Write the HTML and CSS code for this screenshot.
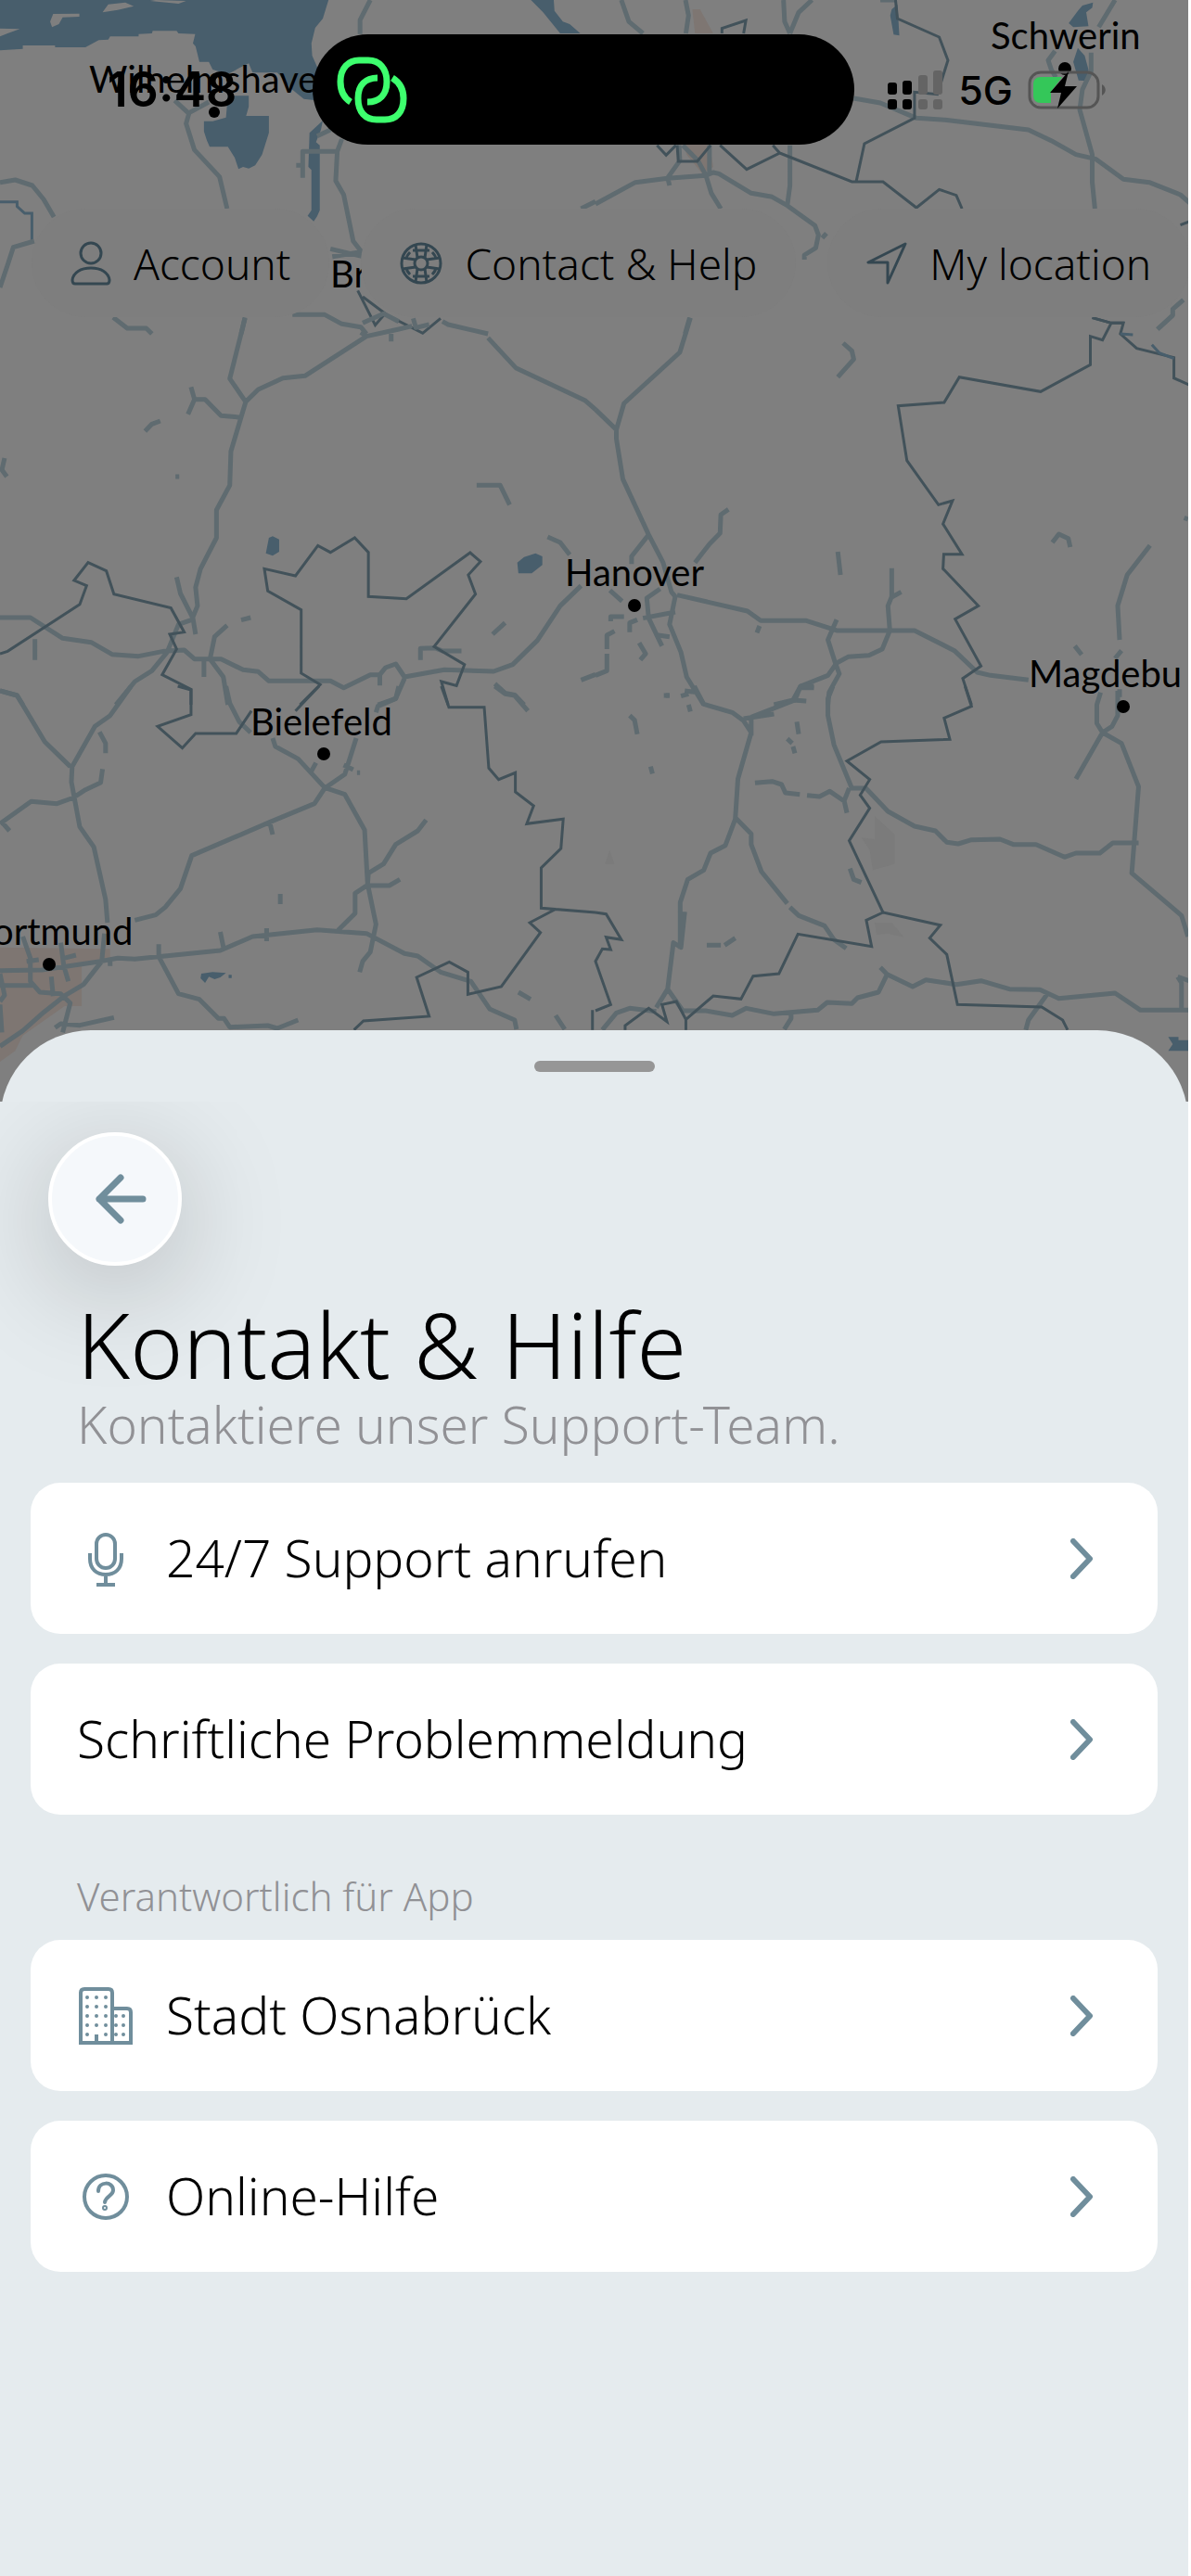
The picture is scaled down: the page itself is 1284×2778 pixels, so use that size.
FILE: index.html
```html
<!DOCTYPE html>
<html lang="de">
<head>
<meta charset="utf-8">
<meta name="viewport" content="width=device-width, initial-scale=1">
<title>Kontakt &amp; Hilfe</title>
<link rel="stylesheet" href="styles.css">
</head>
<body>
<div class="app">
  <div class="map">
    <svg class="map-art" width="1284" height="1200" viewBox="0 0 1284 1200" aria-hidden="true">
      <!-- north-west tile -->
      <g transform="scale(.40944 .33333)">
        <path class="water" d="M0 0H865L850 60L830 90L820 140L822 180L840 230L870 330L800 320L770 290L730 235H665L655 205L630 220L600 240L560 225L550 200H525L515 150L508 140L514 110L470 108L465 100H402L400 108L365 110V118H290L285 128L260 130L225 153H145V147H60V158L0 163Z"/>
        <path class="land" d="M270 40L285 14L330 8L352 20L310 32ZM137 88L132 70L140 45L209 44V54L165 56L155 78ZM0 92L52 94L20 108L0 118ZM395 3L410 0L490 3L470 12Z"/>
        <path class="water" d="M600 310H655V345L648 375H708V430L690 500L672 535L655 545L640 540L628 547L618 510L600 475H552L545 455L537 425V392H560L595 380ZM815 430L850 390L845 420L832 460L842 470V680L835 700L826 716L810 698L820 680V550L812 540ZM1398 0H1458L1460 35L1482 70L1500 78L1528 108H1475L1430 40Z"/>
        <path class="river" d="M0 653H45V668L65 690H84V780"/>
        <path class="road" d="M975 0L948 65V110M460 325L500 370M550 330L498 365L490 400L512 485L578 572L598 675M0 590L40 582L85 600L115 645L142 702M90 780L35 800L22 850L0 930M900 450L888 490L884 585L905 630L930 780L955 820M797 575V490H888M797 535H780M835 440L870 420M1530 675L1568 652M870 805L955 830M875 830L950 815"/>
        <path class="road" d="M298 1027L335 1062H385L400 1080M645 1027L635 1080M770 1018H855L900 1048L950 1058L965 1080M1165 1040L1180 1050L1285 1080"/>
        <path class="border" d="M942 940L988 1052L1010 1020M955 960L1020 1020L1113 1078L1160 1030"/>
        <path class="road" d="M955 1045L1010 1015L1050 1040M1088 1030L1095 1060L1130 1050"/>
      </g>
      <!-- north-east tile -->
      <g transform="translate(642 0) scale(.40944 .33333)">
        <path class="town" d="M255 30H275L310 108H262ZM232 468H300L310 540L280 560L240 500Z"/>
        <path class="water" d="M780 30L795 15L800 115L785 112L776 50ZM1310 8L1308 25L1292 40L1298 85L1258 88L1246 75L1270 35L1282 18ZM1270 155L1288 180L1298 225V262L1272 260L1258 200Z"/>
        <path class="road" d="M68 0L88 70L125 108M237 0L245 50L238 108M495 0L498 70L512 108M570 0L535 40L512 108M750 0H790M1368 0L1325 88M1210 165L1192 195L1200 225L1212 250M1305 170V230L1282 290L1275 355L1308 500V590L1315 675"/>
        <path class="road" d="M680 318L750 333L845 382L920 388L1140 420L1200 455L1265 500L1318 515L1390 580L1458 590L1540 630L1568 660M0 660L105 590L190 577L290 568L310 558L325 562L410 625L465 637L505 665L578 730L587 760L580 802L550 825V840M597 770L608 755M512 470V600L505 665M220 470L222 520L190 575L195 600M230 470L270 520L290 565L305 625L330 675M300 470L300 560M248 1028L236 1080M1548 970L1520 1000V1020L1480 1065"/>
        <path class="border" d="M333 108V92L396 66L390 108M162 470L186 502L212 470M215 470L218 522H268L303 470M328 470L398 548L485 495L467 470M485 495L675 588H757L845 672L905 613L950 632L965 675M790 0L795 60L905 120L928 195L900 305L840 298V382L708 465L686 590M1308 1028L1358 1045H1392M1540 728L1568 715"/>
      </g>
      <!-- west tile -->
      <g transform="translate(0 340) scale(.40944 .33333)">
        <path class="water" d="M708 720L718 715L735 725V765L718 778L700 770ZM1362 800L1380 782L1410 770L1428 780V808L1400 835H1365Z"/>
        <path class="road" d="M645 10L605 205L647 280L608 440L605 550L570 630V720L528 820L515 880L520 940L505 985L470 1000L440 1090L400 1150L355 1185L305 1260M647 280L680 240L745 203L803 196L965 68L1050 45L1085 35M950 55L965 68M1030 60V85M1285 73L1358 170L1540 275L1568 305M503 232L512 272L495 320M512 272H540L582 325L630 330M382 375L400 352L422 342M12 462L5 500L18 522M1255 550L1317 550L1342 613M1442 717L1475 735L1500 775M465 847L475 900L508 980L515 1032M598 1003L565 1040L553 1112L588 1170L600 1260M635 986L660 978M1330 995L1297 1032M92 1048V1115M0 978H80L165 1045L240 1058L295 1097L365 1103L430 1087L485 1083L512 1112H582L640 1147L680 1153L708 1183H870L905 1205L975 1163H1000L1015 1140L1042 1128L1065 1170L1170 1147L1300 1152L1350 1130L1415 1052L1475 940L1530 875M537 1115V1170M1000 1160V1198M1065 1175L1042 1240L995 1260M1107 1115V1078L1145 1076L1165 1086H1215M1303 1192L1330 1222L1355 1228L1380 1260M0 1215L45 1230L60 1260M1530 1180L1568 1162M462 522H472"/>
        <path class="border" d="M0 1095L20 1087L210 935L228 875L195 858L232 800L280 827L300 902L450 947L485 1025L447 1032L465 1080L427 1163L503 1210V1260M790 1260L843 1195L793 1158V953L705 892L696 820L778 843L837 745L870 767L934 720L970 767V910L1070 917L1238 768L1265 797L1233 840L1252 902L1143 1072L1223 1130L1202 1198L1162 1185L1180 1260"/>
      </g>
      <!-- east tile -->
      <g transform="translate(642 340) scale(.40944 .33333)">
        <path class="road" d="M250 8L222 120L75 285L55 370V400L72 530L140 710L178 800L200 895L210 910L195 1000L225 1090L240 1170L285 1260M0 305L55 370M140 710L95 780V805M350 628L330 645L328 705L300 740L262 800M652 90L675 115L680 142L638 200M638 765L645 840M780 818V910L770 940L775 1020L755 1080L720 1100L665 1105L635 1125L612 1165L540 1200L520 1245L470 1260M805 895L780 912M215 905L400 957L435 988H555L635 1020H840L945 1085L1005 1155L1040 1165L1140 1180M635 985L612 1050L630 1120L642 1160L615 1220L612 1260M1203 735L1220 708L1245 722L1250 750M1460 745L1400 840L1375 940L1380 1050M1262 1070L1280 1098M1385 1085L1368 1110M38 890L70 925M170 885L135 915L140 980L175 1070M125 980L210 960M75 975H40V990M110 985L90 995V1025M50 1022L30 1035V1080M30 1095V1150L0 1165M115 1060L132 1095L118 1115M432 1005L425 1027M165 1035L195 1040M235 1215L270 1220M180 1230H195M1520 0L1480 45M1550 655L1560 660M540 1205H575M520 1245L555 1248M1380 1210V1235"/>
        <path class="border" d="M1308 8L1358 25H1390L1382 60L1425 107L1523 137V203L1568 228M1358 25L1335 80L1303 68V160L1172 247L958 200L918 282L797 293L820 470L903 613L940 600L915 675L965 773H917L915 820L1008 940L947 983L1015 1135L967 1175L990 1260"/>
        <path class="river" d="M1382 60L1415 63M1465 95L1485 122L1523 140"/>
      </g>
      <!-- south-west tile -->
      <g transform="translate(0 740) scale(.40944 .33333)">
        <path class="town" d="M0 845L290 850V880L215 900V1035H170L60 1130L40 1180L0 1215Z"/>
        <path class="water" d="M530 930L560 925L595 928L580 942L565 948L550 940L540 960L528 945ZM602 934H610V944H602Z"/>
        <path class="road" d="M0 15L45 30L118 180L185 260M345 0L290 95L250 130L190 260L188 310L210 455L247 520L278 690L283 765M262 148L278 185V217M270 268L265 312L225 335L200 355M0 445L82 373L150 380L195 360M5 440L25 468M595 0L605 55L630 115L660 150M718 168L725 195L785 235L855 328L908 350L960 465L968 640L990 770L975 860L955 890L947 925M1050 0L1042 40L995 65L990 85M938 168L908 285L855 330L828 380L710 440L505 548L475 655L435 715L410 740L355 757M710 440L718 480M832 248L820 275M905 255L930 270M1122 433L1100 468L1042 512L1010 575L970 605L968 643L935 670V735L890 790M1053 625L1025 645H970M738 672V705M1303 0L1330 25L1355 30L1390 80M0 920L110 918L265 890L310 880L355 883L580 855L665 810L835 788L965 800L1065 865L1100 873L1160 925L1240 955L1290 1045L1355 1080L1360 1110M418 835V875L470 995L525 1013L575 1075H590L605 1103L705 1098L730 1107L785 1080M580 795L590 855M702 783V825M275 800L268 890L220 965L172 1000L115 1055L60 1115L0 1165M60 810L80 880V955L105 990L160 995L185 1025L165 1120M160 830L168 905L180 955M0 968H85M0 930L12 1000L0 1020M0 1030L5 1120M135 940L140 1003M168 880L200 870M70 890L102 885M300 1072L210 1097L160 1092L145 1105M290 890V905M1365 990L1397 1013M1463 1065L1487 1110M940 280H948"/>
        <path class="border" d="M468 0L503 12V92L415 130L480 200L515 153H622L662 80M778 80L840 0M1162 0L1182 68H1275L1287 265L1313 302L1357 280V342L1405 387L1387 445L1483 430L1477 525L1425 588V718L1568 732M1465 720L1395 765L1423 797L1320 972L1232 997V925L1183 892L1097 942L1130 1068L957 1083L932 1112M1560 1112V1048"/>
      </g>
      <!-- south-east tile -->
      <g transform="translate(642 740) scale(.40944 .33333)">
        <path class="water" d="M1508 1135H1535V1145H1568V1180H1508L1520 1158Z"/>
        <path class="moor" d="M735 420L788 480V575L730 595L722 530L700 490L735 495ZM735 765H780L812 812L770 800L740 805ZM25 575L37 530L50 575Z"/>
        <path class="road" d="M260 0L285 58L360 85L390 112L410 150L375 300L368 430L342 515L303 540L285 595L243 625L223 700V850M470 90L390 105M410 100L525 45L540 0H575M410 100V160M90 95L103 110L110 155M145 260L150 283M625 0L612 40V95L628 190L675 330H712L770 405L840 453L895 468L925 505L955 510L990 497L1065 495L1100 512H1160L1235 553L1265 540H1328L1362 507H1430M420 313L465 308L490 318L500 345L538 350M557 353L590 357L617 340L655 372L662 410M655 370L668 330M368 425L410 478V512L437 600L505 703M512 715L535 742L603 775L628 820L660 848M530 115L535 155M505 170L518 185M520 195L525 217M1330 20L1320 60V120L1335 150L1265 300M1375 15V95L1360 130L1335 150L1385 185L1430 325L1412 605L1543 742L1560 810M293 838H330M340 838L368 815M670 590L680 625L700 635M235 730L225 845L205 830L190 980L160 1040M190 980L230 1050H290L360 1065L397 1042L470 1060L585 1048L610 1023L675 1027L690 1008L745 990L768 932L835 972L870 950L950 965L1015 953L1090 980L1170 982L1220 1010L1368 993L1435 1048H1568M750 910L768 932M515 1060V1075L497 1110M1190 995L1140 1080L1133 1112M18 1112L55 1057L90 1042L160 1052M1533 940L1543 960V1048M1533 940L1568 955M185 30H195M225 32L245 25M245 60L250 82"/>
        <path class="border" d="M973 0L990 65L918 103L933 172L752 180L662 242L722 302L697 352L722 395L668 500L757 732L908 773L880 815L925 868L953 1030L1175 1038L1230 1080L1243 1112M757 732L713 757L727 842L533 802L483 930L415 938L383 1012L310 1002L238 1078L213 1020L175 1030L188 1085L140 1042L78 1098V1112M238 1078V1112M0 732L28 737L68 820L28 812L40 852L18 850L0 890L40 1030L0 1050"/>
      </g>
      <g class="town-dots">
        <circle cx="231" cy="121" r="6"/><circle cx="684" cy="653" r="7"/><circle cx="1211" cy="762" r="7"/><circle cx="349" cy="813" r="7"/><circle cx="53" cy="1040" r="7"/><circle cx="1148" cy="74" r="7"/>
      </g>
    </svg>
    <span class="place place-wilhelmshaven">Wilhelmshaven</span>
    <span class="place place-schwerin">Schwerin</span>
    <span class="place place-bremen">Br</span>
    <span class="place place-hanover">Hanover</span>
    <span class="place place-magdeburg">Magdebu</span>
    <span class="place place-bielefeld">Bielefeld</span>
    <span class="place place-dortmund">ortmund</span>
  </div>

  <header class="top">
    <div class="status">
      <time class="clock">16:48</time>
      <div class="island">
        <svg width="76" height="72" viewBox="0 0 76 72" fill="none" stroke="#3dff6e" stroke-width="7" aria-hidden="true">
          <path d="M15 49C7 44 4 37 4 27C4 12 13 4 24 4H34C46 4 54 13 54 27C54 41 46 49 33 49"/>
          <path d="M44 23C31 23 23 31 23 45C23 60 31 68 43 68H52C64 68 72 60 72 45C72 36 68 28 60 23"/>
        </svg>
      </div>
      <div class="indicators">
        <svg width="60" height="42" viewBox="0 0 60 42" aria-hidden="true">
          <g fill="#000"><rect x="0" y="13" width="10" height="13" rx="3"/><rect x="16" y="11" width="10" height="15" rx="3"/><rect x="0" y="31" width="10" height="11" rx="3"/><rect x="16" y="31" width="10" height="11" rx="3"/></g>
          <g fill="#646464"><rect x="33" y="5" width="10" height="21" rx="3"/><rect x="49" y="0" width="10" height="26" rx="3"/><rect x="33" y="31" width="10" height="11" rx="3"/><rect x="49" y="31" width="10" height="11" rx="3"/></g>
        </svg>
        <span class="network">5G</span>
        <svg width="84" height="48" viewBox="0 0 84 48" aria-hidden="true">
          <rect x="2" y="5" width="74" height="38" rx="12" fill="none" stroke="#555" stroke-width="3"/>
          <path d="M14 10H37L25 26V38H14C9 38 6 35 6 30V18C6 13 9 10 14 10Z" fill="#34c759"/>
          <path d="M80 18C85 21 85 27 80 30Z" fill="#555"/>
          <path d="M44 4L24 27H36L32 44L53 20H40Z" fill="#000"/>
        </svg>
      </div>
    </div>
    <nav class="pills">
      <button class="pill" type="button">
        <svg width="44" height="48" viewBox="0 0 44 48" fill="none" stroke="#344751" stroke-width="3" aria-hidden="true"><circle cx="22" cy="13" r="11"/><path d="M2 42C3 34 11 29 22 29S41 34 42 42C42 45 41 46 39 46H5C3 46 2 45 2 42Z"/></svg>
        Account
      </button>
      <button class="pill" type="button">
        <svg width="46" height="48" viewBox="0 0 46 48" fill="none" stroke="#344751" stroke-width="3" aria-hidden="true"><circle cx="23" cy="24" r="21"/><circle cx="23" cy="24" r="7"/><path d="M17 4L19 18M29 4L27 18M17 44L19 30M29 44L27 30M3 18L17 20M3 30L17 28M43 18L29 20M43 30L29 28M11 12C8 15 7 18 7 20M35 12C38 15 39 18 39 20M11 36C8 33 7 30 7 28M35 36C38 33 39 30 39 28M14 10H32M14 38H32"/></svg>
        Contact &amp; Help
      </button>
      <button class="pill" type="button">
        <svg width="44" height="48" viewBox="0 0 44 48" fill="none" stroke="#344751" stroke-width="3" stroke-linejoin="round" aria-hidden="true"><path d="M42 3L2 23H23V45Z"/></svg>
        My location
      </button>
    </nav>
  </header>

  <main class="sheet">
    <div class="grip"></div>
    <div class="sheet-body">
      <button class="back" type="button" aria-label="Zurück">
        <svg width="56" height="54" viewBox="0 0 56 54" fill="none" stroke="#708e9c" stroke-width="7" stroke-linecap="round" stroke-linejoin="round" aria-hidden="true"><path d="M52 27H5M28 4L5 27L28 50"/></svg>
      </button>
      <h1 class="title">Kontakt &amp; Hilfe</h1>
      <p class="subtitle">Kontaktiere unser Support-Team.</p>
      <div class="list">
        <a class="card" href="#support">
          <svg class="icon" viewBox="0 0 60 64" fill="none" stroke="#708e9c" stroke-width="4" aria-hidden="true"><rect x="21" y="6" width="20" height="36" rx="10"/><path d="M14 26V32C14 43 21 49 31 49S48 43 48 32V26M31 49V59M21 60H41"/></svg>
          <span class="label">24/7 Support anrufen</span>
          <svg class="chevron" viewBox="0 0 24 44" aria-hidden="true"><path d="M3 3L21 22L3 41"/></svg>
        </a>
        <a class="card" href="#meldung">
          <span class="label">Schriftliche Problemmeldung</span>
          <svg class="chevron" viewBox="0 0 24 44" aria-hidden="true"><path d="M3 3L21 22L3 41"/></svg>
        </a>
      </div>
      <h2 class="section">Verantwortlich für App</h2>
      <div class="list">
        <a class="card" href="#stadt">
          <svg class="icon" viewBox="0 0 60 64" fill="none" stroke="#708e9c" stroke-width="4" aria-hidden="true"><path d="M4 61V7Q4 3 8 3H34Q38 3 38 7V61M38 24H54Q58 24 58 28V61M2 61H60M21 52V60"/><path stroke-linecap="round" d="M11 12h0M21 12h0M31 12h0M11 22h0M21 22h0M31 22h0M11 32h0M21 32h0M31 32h0M11 42h0M21 42h0M31 42h0M11 52h0M31 52h0M42 32h0M50 32h0M42 42h0M50 42h0M42 52h0M50 52h0"/></svg>
          <span class="label">Stadt Osnabrück</span>
          <svg class="chevron" viewBox="0 0 24 44" aria-hidden="true"><path d="M3 3L21 22L3 41"/></svg>
        </a>
        <a class="card" href="#hilfe">
          <svg class="icon" viewBox="0 0 60 64" fill="none" stroke="#708e9c" stroke-width="4" stroke-linecap="round" aria-hidden="true"><circle cx="31" cy="32" r="23"/><path d="M23 26C23 15 39 15 39 25C39 31 31 31 30 38"/><circle cx="30" cy="44" r="1"/></svg>
          <span class="label">Online-Hilfe</span>
          <svg class="chevron" viewBox="0 0 24 44" aria-hidden="true"><path d="M3 3L21 22L3 41"/></svg>
        </a>
      </div>
    </div>
  </main>
</div>
</body>
</html>
```
FILE: styles.css
```css
* { box-sizing: border-box; }

body {
  margin: 0;
  padding-right: 3px;
  background: #fff;
  color: #000;
  font-family: "Noto Sans", "Open Sans", sans-serif;
  font-weight: 350;
}

button {
  border: 0;
  color: inherit;
  font: inherit;
}

svg { display: block; flex: none; }

.app {
  position: relative;
  display: flex;
  flex-direction: column;
  min-height: 100vh;
  overflow: hidden;
  background: #7f7f7f;
}

/* Map behind everything, already dimmed */
.map { position: absolute; inset: 0; }
.map-art path { vector-effect: non-scaling-stroke; }
.water { fill: #485e6c; }
.land { fill: #7f7f7f; }
.town { fill: #7e7672; }
.moor { fill: #7b7b7b; }
.road { fill: none; stroke: #5f6b70; stroke-width: 5; stroke-linejoin: round; }
.border { fill: none; stroke: #42525a; stroke-width: 3; }
.river { fill: none; stroke: #485e6c; stroke-width: 3; }
.town-dots { fill: #000; }

.place {
  position: absolute;
  font-family: Lato, sans-serif;
  font-weight: 400;
  font-size: 40px;
  line-height: 48px;
  white-space: nowrap;
}
.place-wilhelmshaven { left: 96px; top: 61px; }
.place-schwerin { left: 1068px; top: 14px; }
.place-bremen { left: 356px; top: 271px; }
.place-hanover { left: 609px; top: 593px; }
.place-magdeburg { left: 1109px; top: 702px; }
.place-bielefeld { left: 270px; top: 754px; }
.place-dortmund { left: -8px; top: 980px; }

.top { position: relative; height: 40vh; }

.status {
  display: grid;
  grid-template-columns: 1fr 584px 1fr;
  align-items: center;
  padding-top: 37px;
  padding-right: 23px;
}
.clock {
  justify-self: center;
  padding-left: 34px;
  font: 600 52px/60px Inter, sans-serif;
}
.island {
  display: flex;
  align-items: center;
  height: 119px;
  padding-left: 26px;
  border-radius: 60px;
  background: #000;
}
.indicators {
  display: flex;
  align-items: center;
  justify-content: flex-end;
  gap: 16px;
  padding-right: 66px;
}
.network { font: 500 43px/60px Inter, sans-serif; }

.pills {
  display: flex;
  gap: 34px;
  margin-top: 69px;
  padding-left: 34px;
  overflow: hidden;
}
.pill {
  display: flex;
  flex: none;
  align-items: center;
  gap: 24px;
  height: 117px;
  padding: 0 42px;
  border-radius: 59px;
  background: #7e7e7e;
  font-size: 46px;
  white-space: nowrap;
}

.sheet {
  position: relative;
  flex: 1;
  display: flex;
  flex-direction: column;
  border-radius: 98px 98px 0 0;
  background: #e5ebee;
}
.grip {
  align-self: center;
  width: 130px;
  height: 12px;
  margin: 33px 0 32px;
  border-radius: 6px;
  background: #969696;
}
.sheet-body {
  flex: 1;
  padding: 33px 33px 60px;
  overflow: hidden;
  background: #e5ebee;
}
.back {
  display: flex;
  align-items: center;
  justify-content: center;
  width: 144px;
  height: 144px;
  margin-left: 19px;
  padding: 0 0 0 12px;
  border: 4px solid #fff;
  border-radius: 50%;
  background: #f5f8fb;
  box-shadow: 0 24px 120px rgba(0, 0, 0, .22);
}
.title {
  margin: 30px 50px 0;
  font-size: 97px;
  font-weight: inherit;
  line-height: 108px;
}
.subtitle {
  margin: 0 50px 30px;
  color: #919195;
  font-size: 55px;
  line-height: 66px;
}
.list {
  display: flex;
  flex-direction: column;
  gap: 32px;
}
.card {
  display: flex;
  align-items: center;
  gap: 36px;
  min-height: 163px;
  padding: 0 70px 0 50px;
  border-radius: 32px;
  background: #fff;
  color: #000;
  text-decoration: none;
}
.label {
  flex: 1;
  padding-bottom: 2px;
  font-size: 55px;
  line-height: 66px;
}
.icon { width: 60px; height: 64px; }
.chevron {
  width: 24px;
  height: 44px;
  fill: none;
  stroke: #708e9c;
  stroke-width: 6;
  stroke-linecap: round;
  stroke-linejoin: round;
}
.section {
  margin: 62px 50px 21px;
  color: #919195;
  font-size: 42px;
  font-weight: inherit;
  line-height: 52px;
}
```
